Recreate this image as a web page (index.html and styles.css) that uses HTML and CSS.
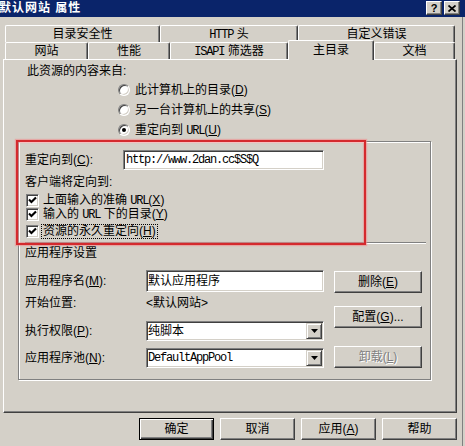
FILE: index.html
```html
<!DOCTYPE html>
<html lang="zh-CN">

<head>
    <meta charset="UTF-8">
    <title>默认网站 属性</title>
    <link rel="stylesheet" href="styles.css">
</head>

<body>
<div class="window">
    <div class="titlebar">
        <span class="title">默认网站 属性</span>
        <div class="caption">
            <span class="cbtn">?</span>
            <span class="cbtn">
                <svg width="8" height="7" viewBox="0 0 8 7"><path d="M0.5 0.5 L7.5 6.5 M7.5 0.5 L0.5 6.5" stroke="#000" stroke-width="1.7"/></svg>
            </span>
        </div>
    </div>

    <div class="dialog">
        <div class="tab-row">
            <div class="tab t-security">目录安全性</div>
            <div class="tab t-http"><span class="lat">HTTP</span> 头</div>
            <div class="tab t-errors">自定义错误</div>
        </div>
        <div class="tab-row">
            <div class="tab t-site">网站</div>
            <div class="tab t-perf">性能</div>
            <div class="tab t-isapi"><span class="lat">ISAPI</span> 筛选器</div>
            <div class="tab t-home active">主目录</div>
            <div class="tab t-docs">文档</div>
        </div>

        <div class="panel">
            <div class="source">此资源的内容来自:</div>
            <div class="radios">
                <div class="radio-row"><span class="radio"></span><span>此计算机上的目录(<u>D</u>)</span></div>
                <div class="radio-row"><span class="radio"></span><span>另一台计算机上的共享(<u>S</u>)</span></div>
                <div class="radio-row"><span class="radio checked"></span><span>重定向到 <span class="lat">URL</span>(<u>U</u>)</span></div>
            </div>

            <div class="group">
                <div class="field-row redirect-row">
                    <span class="label redirect-label">重定向到(<u>C</u>):</span>
                    <div class="edit url-edit"><span class="mono">http://www.2dan.cc$S$Q</span></div>
                </div>
                <div class="hint">客户端将定向到:</div>
                <div class="check-row">
                    <span class="checkbox"><svg width="9" height="9" viewBox="0 0 9 9"><path d="M1 3.6 L3.4 6 L8 1.4" fill="none" stroke="#000" stroke-width="2.1"/></svg></span>
                    <span class="check-text">上面输入的准确 <span class="lat">URL</span>(<u>X</u>)</span>
                </div>
                <div class="check-row">
                    <span class="checkbox"><svg width="9" height="9" viewBox="0 0 9 9"><path d="M1 3.6 L3.4 6 L8 1.4" fill="none" stroke="#000" stroke-width="2.1"/></svg></span>
                    <span class="check-text">输入的 <span class="lat">URL</span> 下的目录(<u>Y</u>)</span>
                </div>
                <div class="check-row focused">
                    <span class="checkbox"><svg width="9" height="9" viewBox="0 0 9 9"><path d="M1 3.6 L3.4 6 L8 1.4" fill="none" stroke="#000" stroke-width="2.1"/></svg></span>
                    <span class="check-text">资源的永久重定向(<u>H</u>)</span>
                </div>

                <div class="sep"></div>
                <div class="app-title">应用程序设置</div>

                <div class="app-area">
                    <div class="app-fields">
                        <div class="field-row row-name">
                            <span class="label">应用程序名(<u>M</u>):</span>
                            <div class="edit name-edit">默认应用程序</div>
                        </div>
                        <div class="field-row row-start">
                            <span class="label">开始位置:</span>
                            <span>&lt;默认网站&gt;</span>
                        </div>
                        <div class="field-row row-perm">
                            <span class="label">执行权限(<u>P</u>):</span>
                            <div class="edit combo">
                                <span>纯脚本</span>
                                <span class="drop"><svg width="7" height="4" viewBox="0 0 7 4"><path d="M0 0 H7 L3.5 4 Z" fill="#000"/></svg></span>
                            </div>
                        </div>
                        <div class="field-row row-pool">
                            <span class="label">应用程序池(<u>N</u>):</span>
                            <div class="edit combo">
                                <span class="mono">DefaultAppPool</span>
                                <span class="drop"><svg width="7" height="4" viewBox="0 0 7 4"><path d="M0 0 H7 L3.5 4 Z" fill="#000"/></svg></span>
                            </div>
                        </div>
                    </div>
                    <div class="app-buttons">
                        <div class="btn b-remove"><span>删除(<u>E</u>)</span></div>
                        <div class="btn b-config"><span>配置(<u>G</u>)...</span></div>
                        <div class="btn b-unload disabled"><span>卸载(<u>L</u>)</span></div>
                    </div>
                </div>
            </div>
        </div>

        <div class="footer">
            <div class="btn default">确定</div>
            <div class="btn">取消</div>
            <div class="btn"><span>应用(<u>A</u>)</span></div>
            <div class="btn">帮助</div>
        </div>
    </div>

    <!-- 标注框 -->
    <div class="annot"></div>
</div>
</body>

</html>
```

FILE: styles.css
```css
* {
    box-sizing: border-box;
}

body {
    margin: 0;
    width: 465px;
    height: 446px;
    overflow: hidden;
    background-color: #d4d0c8;
    font-family: "Liberation Sans", "Noto Sans CJK SC", sans-serif;
    font-size: 12px;
    line-height: 14px;
    color: #000;
}

u {
    text-decoration: underline;
    text-underline-offset: 1px;
}

.lat,
.mono {
    font-family: "Liberation Mono", "DejaVu Sans Mono", monospace;
    font-size: 12px;
    letter-spacing: -1.2px;
}

.window {
    position: relative;
    width: 465px;
    height: 446px;
}

/* タイトルバー */
.titlebar {
    height: 17px;
    background-color: #0a246a;
    display: flex;
    justify-content: space-between;
    align-items: flex-start;
}

.title {
    color: #fff;
    font-weight: bold;
    letter-spacing: 1px;
    margin: 1px 0 0 -1px;
}

.caption {
    display: flex;
    gap: 2px;
    padding: 1px 5px 0 0;
}

.cbtn {
    width: 16px;
    height: 14px;
    background-color: #d4d0c8;
    border: 1px solid;
    border-color: #fff #404040 #404040 #fff;
    box-shadow: inset -1px -1px 0 #808080;
    display: flex;
    align-items: center;
    justify-content: center;
    font: bold 11px/1 "Liberation Sans", sans-serif;
}

.dialog {
    height: 429px;
    margin-right: 2px;
    border-right: 1px solid #808080;
    padding: 8px 5px 0 3px;
}

/* タブ */
.tab-row {
    display: flex;
    height: 17px;
    padding-left: 2px;
}

.tab {
    height: 17px;
    border-top: 1px solid #fff;
    border-left: 1px solid #fff;
    border-right: 1px solid #404040;
    border-radius: 2px 2px 0 0;
    box-shadow: inset -1px 0 0 #808080;
    text-align: center;
    padding-top: 1px;
    line-height: 15px;
    white-space: nowrap;
}

.t-security { width: 155px; }
.t-http { width: 138px; }
.t-errors { width: 157px; }
.t-site { width: 83px; }
.t-perf { width: 82px; }
.t-isapi { width: 118px; }
.t-home { width: 86px; }
.t-docs { width: 81px; }

.tab.active {
    position: relative;
    z-index: 1;
    align-self: flex-start;
    height: 20px;
    margin-top: -2px;
    padding-top: 2px;
    background-color: #d4d0c8;
}

/* パネル */
.panel {
    height: 354px;
    border-top: 1px solid #fff;
    border-left: 1px solid #fff;
    border-right: 1px solid #404040;
    border-bottom: 1px solid #404040;
    box-shadow: inset -1px -1px 0 #808080;
    padding: 4px 25px 0 14px;
}

.source {
    margin-left: 9px;
}

.radios {
    margin: 2px 0 0 100px;
}

.radio-row {
    display: flex;
    align-items: center;
    gap: 5px;
    height: 20px;
}

.radio {
    position: relative;
    width: 12px;
    height: 12px;
    border-radius: 50%;
    background-color: #fff;
    border: 1px solid;
    border-color: #808080 #fff #fff #808080;
    box-shadow: inset 1px 1px 0 #404040, inset -1px -1px 0 #d4d0c8;
}

.radio.checked::after {
    content: "";
    position: absolute;
    top: 3px;
    left: 3px;
    width: 4px;
    height: 4px;
    border-radius: 50%;
    background-color: #000;
}

.group {
    margin-top: 1px;
    border: 1px solid #808080;
    box-shadow: inset 1px 1px 0 #fff, 1px 1px 0 #fff;
    padding: 8px 0 11px 6px;
}

.field-row {
    display: flex;
    align-items: center;
}

.label {
    width: 121px;
    flex-shrink: 0;
}

.redirect-row {
    height: 20px;
}

.redirect-label {
    width: 98px;
}

.edit {
    background-color: #fff;
    border: 1px solid;
    border-color: #808080 #fff #fff #808080;
    box-shadow: inset 1px 1px 0 #404040, inset -1px -1px 0 #d4d0c8;
    display: flex;
    align-items: center;
}

.url-edit {
    width: 201px;
    height: 20px;
    padding-left: 2px;
}

.hint {
    margin-top: 5px;
}

.check-row {
    display: flex;
    align-items: center;
    gap: 2px;
    height: 13px;
    line-height: 13px;
    margin-left: 1px;
    margin-top: 1px;
}

.hint + .check-row {
    margin-top: 5px;
}

.checkbox {
    width: 13px;
    height: 13px;
    background-color: #fff;
    border: 1px solid;
    border-color: #808080 #fff #fff #808080;
    box-shadow: inset 1px 1px 0 #404040, inset -1px -1px 0 #d4d0c8;
    display: flex;
    align-items: center;
    justify-content: center;
}

.check-text {
    padding: 0 2px;
    white-space: nowrap;
}

.check-row.focused {
    height: 15px;
    margin-top: 3px;
}

.check-row.focused .check-text {
    border: 1px dotted #000;
    padding: 0 1px;
    height: 15px;
}

.sep {
    height: 2px;
    border-top: 1px solid #808080;
    border-bottom: 1px solid #fff;
    margin: 3px 4px 0 0;
}

.app-title {
    margin-top: 2px;
}

.app-area {
    display: flex;
    align-items: flex-start;
    margin-top: 10px;
}

.row-name {
    height: 22px;
}

.name-edit {
    width: 178px;
    height: 22px;
    padding-left: 1px;
}

.row-start {
    height: 14px;
    margin-top: 4px;
}

.row-perm {
    height: 20px;
    margin-top: 11px;
}

.row-pool {
    height: 20px;
    margin-top: 7px;
}

.combo {
    width: 178px;
    height: 20px;
    justify-content: space-between;
    padding: 0 1px 0 1px;
}

.drop {
    width: 16px;
    height: 16px;
    background-color: #d4d0c8;
    border: 1px solid;
    border-color: #d4d0c8 #404040 #404040 #d4d0c8;
    box-shadow: inset 1px 1px 0 #fff, inset -1px -1px 0 #808080;
    display: flex;
    align-items: center;
    justify-content: center;
}

.app-buttons {
    display: flex;
    flex-direction: column;
    margin-left: 10px;
    width: 88px;
}

.btn {
    height: 22px;
    background-color: #d4d0c8;
    border: 1px solid;
    border-color: #fff #404040 #404040 #fff;
    box-shadow: inset -1px -1px 0 #808080;
    display: flex;
    align-items: center;
    justify-content: center;
    white-space: nowrap;
}

.b-remove { margin-top: 1px; }
.b-config { margin-top: 13px; }
.b-unload { margin-top: 18px; }

.btn.disabled {
    color: #808080;
    text-shadow: 1px 1px 0 #fff;
}

.btn.default {
    border-color: #000;
    box-shadow: inset 1px 1px 0 #fff, inset -1px -1px 0 #404040, inset -2px -2px 0 #808080;
}

.footer {
    display: flex;
    justify-content: flex-end;
    gap: 6px;
    margin-top: 5px;
}

.footer .btn {
    width: 75px;
}

/* 赤い注釈枠 */
.annot {
    position: absolute;
    left: 16px;
    top: 140px;
    width: 350px;
    height: 105px;
    border: 2px solid #d42a2e;
    box-shadow: 0 0 1px 1px rgba(240, 140, 140, 0.6), inset 0 0 1px 1px rgba(240, 140, 140, 0.6);
}
```
